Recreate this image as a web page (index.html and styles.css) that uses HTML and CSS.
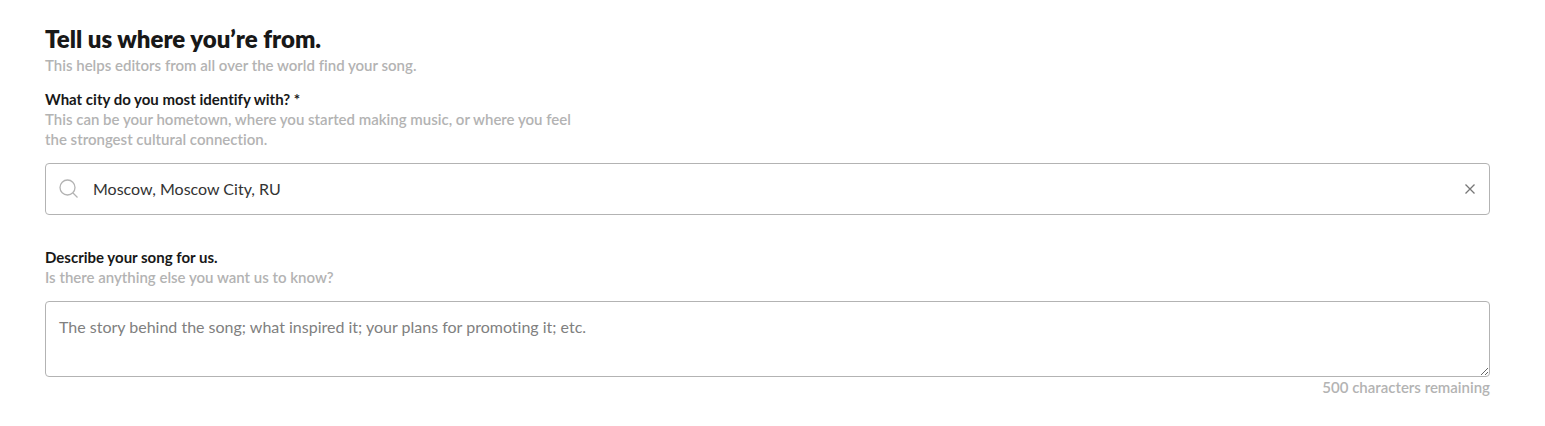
FILE: index.html
```html
<!DOCTYPE html>
<html lang="en">
<head>
  <meta charset="UTF-8" />
  <meta name="viewport" content="width=device-width, initial-scale=1.0"/>
  <title>Song details</title>
  <link rel="stylesheet" href="styles.css">
</head>
<body>
  <form class="song-form">
    <h2>Tell us where you’re from.</h2>
    <p class="hint intro">This helps editors from all over the world find your song.</p>

    <div class="form-group">
      <label for="city">What city do you most identify with? *</label>
      <p class="hint narrow" id="cityHint">This can be your hometown, where you started making music, or where you feel the strongest cultural connection.</p>
      <div class="search-box">
        <svg class="search-icon" viewBox="0 0 20 20" aria-hidden="true">
          <circle cx="8.5" cy="8.5" r="7.5"/>
          <path d="M14 14l4.5 4.5"/>
        </svg>
        <input type="text" id="city" name="city" value="Moscow, Moscow City, RU" aria-describedby="cityHint" required />
        <button type="button" class="clear-btn" aria-label="Clear city">
          <svg viewBox="0 0 12 12" aria-hidden="true"><path d="M1.5 1.500l9 9M10.500 1.500l-9 9"/></svg>
        </button>
      </div>
    </div>

    <div class="form-group">
      <label for="story">Describe your song for us.</label>
      <p class="hint" id="storyHint">Is there anything else you want us to know?</p>
      <textarea id="story" name="story" maxlength="500" placeholder="The story behind the song; what inspired it; your plans for promoting it; etc." aria-describedby="storyHint"></textarea>
      <p class="hint remaining">500 characters remaining</p>
    </div>
  </form>
</body>
</html>
```

FILE: styles.css
```css
* {
  box-sizing: border-box;
}
body {
  margin: 0;
  padding: 23px 55px 20px 45px;
  background: #fff;
  color: #181818;
  font-family: Lato, sans-serif;
  font-size: 15px;
  line-height: 20px;
  font-variant-ligatures: none;
}
h2 {
  margin: 0;
  font-size: 24px;
  line-height: 32px;
  font-weight: 800;
}
p {
  margin: 0;
}
.hint {
  color: #b3b3b3;
  font-weight: 600;
}
.intro {
  margin-bottom: 14px;
}
.narrow {
  max-width: 536px;
}
.form-group + .form-group {
  margin-top: 32px;
}
label {
  display: block;
  font-weight: 700;
}
.search-box {
  display: flex;
  align-items: center;
  height: 52px;
  margin-top: 14px;
  padding: 0 13px;
  border: 1px solid #b3b3b3;
  border-radius: 4px;
}
.search-icon {
  width: 20px;
  height: 20px;
  margin-right: 14px;
  fill: none;
  stroke: #b3b3b3;
  stroke-width: 1.3;
}
input[type="text"],
textarea {
  color: #333;
  font-family: Lato, sans-serif;
  font-size: 16px;
  line-height: 24px;
  font-variant-ligatures: none;
}
input[type="text"] {
  flex: 1;
  min-width: 0;
  padding: 0;
  border: none;
  outline: none;
  background: none;
}
.clear-btn {
  display: flex;
  padding: 0;
  border: none;
  background: none;
  cursor: pointer;
}
.clear-btn svg {
  width: 12px;
  height: 12px;
  fill: none;
  stroke: #777;
  stroke-width: 1.3;
}
textarea {
  display: block;
  width: 100%;
  height: 76px;
  margin-top: 14px;
  padding: 13px;
  border: 1px solid #b3b3b3;
  border-radius: 4px;
  resize: vertical;
}
textarea::placeholder {
  color: #808080;
}
.remaining {
  text-align: right;
}
```
